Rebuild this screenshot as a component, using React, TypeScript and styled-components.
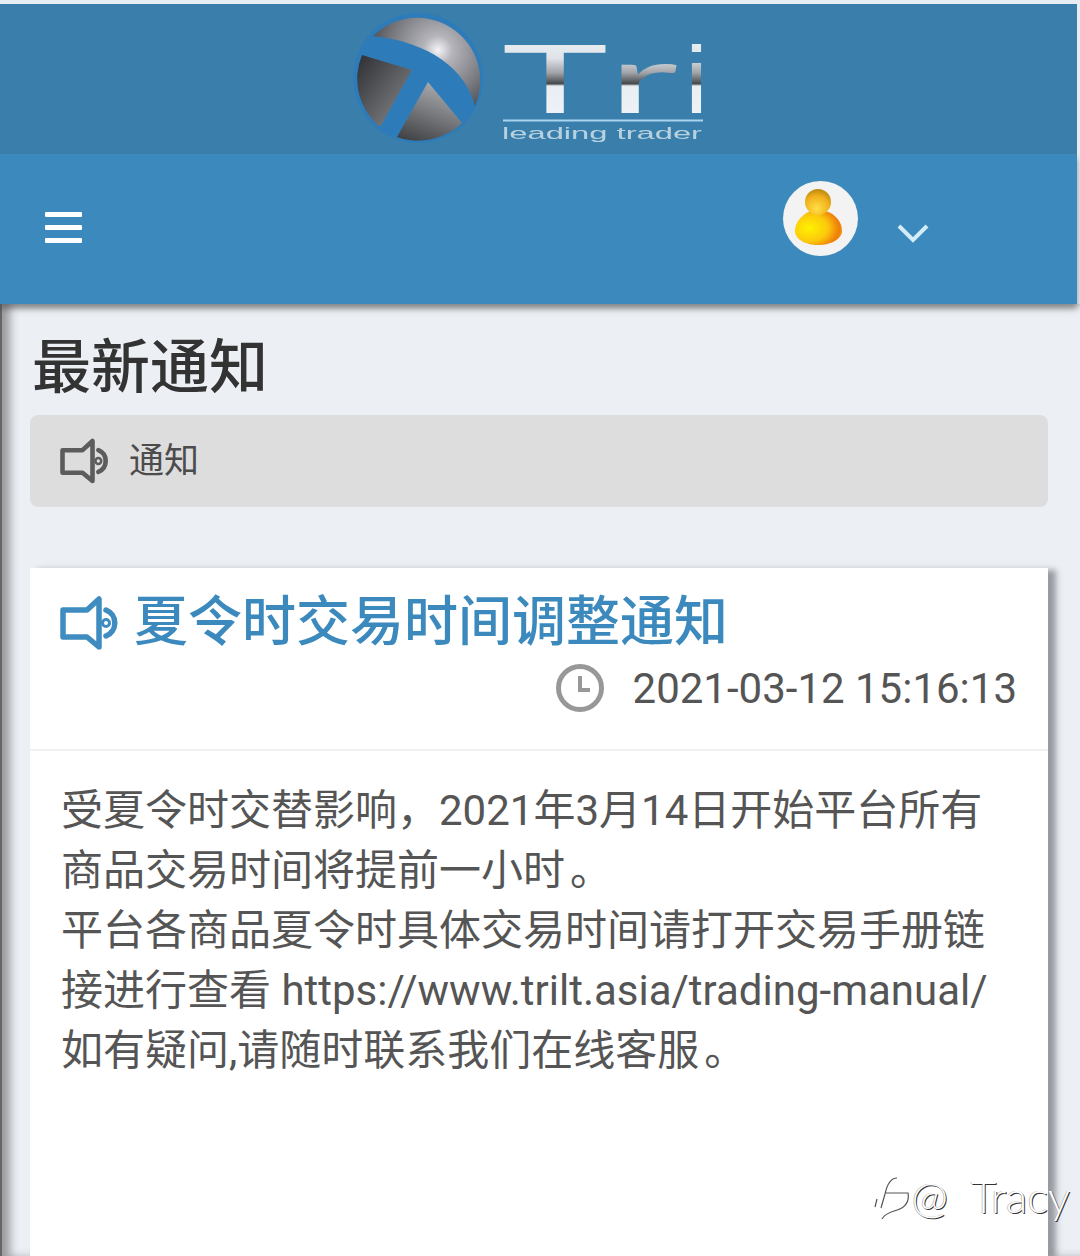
import React from "react";
import styled, { createGlobalStyle } from "styled-components";

const Global = createGlobalStyle`
  html, body { margin: 0; padding: 0; background: #e6eef4; }
  body { font-family: Roboto, "Noto Sans CJK SC", sans-serif; }
`;

const Page = styled.div`
  position: relative;
  width: 1080px;
  height: 1256px;
  padding: 4px 3px 0 0;
  box-sizing: border-box;
  overflow: hidden;
  display: flex;
  flex-direction: column;
`;
const LogoBar = styled.header`
  flex: none;
  height: 150px;
  background: #3a7fab;
  padding-left: 340px;
`;
const Logo = styled.svg`
  display: block;
  width: 380px;
  height: 150px;
  filter: blur(0.5px);
`;
const NavBar = styled.nav`
  position: relative;
  z-index: 2;
  flex: none;
  height: 150px;
  background: #3c8abd;
  display: flex;
  align-items: center;
  padding: 0 0 0 45px;
  box-shadow: 0 5px 6px rgba(60, 60, 60, 0.5);
`;
const Burger = styled.div`
  width: 37px;
  display: flex;
  flex-direction: column;
  gap: 8px;
  margin-top: -4px;
  & > i { display: block; height: 5px; background: #fff; border-radius: 1px; }
`;
const Avatar = styled.div`
  width: 75px;
  height: 75px;
  border-radius: 50%;
  background: #f4f3f3;
  margin-left: 701px;
  margin-top: -21px;
  flex: none;
`;
const Chevron = styled.svg`
  width: 32px;
  height: 20px;
  margin-left: 39px;
  margin-top: 8px;
  flex: none;
  filter: blur(0.4px);
`;
const Main = styled.main`
  flex: 1;
  min-height: 0;
  margin-right: -3px;
  padding: 27px 32px 0 30px;
  background: #ecf0f5;
  box-shadow: inset 2px 0 0 #666, inset 12px 0 10px -2px #9a9a9e;
  display: flex;
  flex-direction: column;
`;
const PageTitle = styled.h1`
  margin: 0 0 0 2px;
  font-size: 59px;
  line-height: 74px;
  height: 84px;
  font-weight: 500;
  color: #333;
`;
const Crumb = styled.div`
  flex: none;
  height: 92px;
  background: #dddddd;
  border-radius: 8px;
  display: flex;
  align-items: center;
  padding: 0 0 0 30px;
  font-size: 35px;
  color: #4c4c4c;
  gap: 19px;
`;
const CrumbLabel = styled.span`
  margin-bottom: 7px;
`;
const Speaker = styled.svg<{ $size: number }>`
  width: ${(p) => p.$size}px;
  height: ${(p) => p.$size}px;
  flex: none;
  filter: blur(0.6px);
`;
const Card = styled.article`
  flex: 1;
  margin-top: 61px;
  background: #fff;
  box-shadow: 8px 2px 6px rgba(70, 70, 75, 0.5);
  display: flex;
  flex-direction: column;
`;
const CardHead = styled.div`
  flex: none;
  height: 183px;
  padding: 25px 31px 0 30px;
  box-sizing: border-box;
  border-bottom: 2px solid #f1f1f1;
`;
const CardTitle = styled.h2`
  margin: 0;
  height: 60px;
  display: flex;
  align-items: center;
  gap: 14px;
  font-size: 54px;
  line-height: 66px;
  font-weight: 500;
  color: #3c8abd;
  white-space: nowrap;
`;
const DateRow = styled.div`
  margin-top: 10px;
  height: 50px;
  display: flex;
  align-items: center;
  justify-content: flex-end;
  gap: 28px;
  font-size: 42px;
  color: #555;
`;
const Clock = styled.svg`
  width: 50px;
  height: 50px;
  flex: none;
  filter: blur(0.6px);
`;
const CardBody = styled.div`
  padding: 30px 30px 0 31px;
  font-size: 42px;
  line-height: 60px;
  color: #555;
`;
const Stop = styled.span`
  margin-left: 5px;
`;
const Watermark = styled.div`
  position: absolute;
  right: 10px;
  top: 1172px;
  display: flex;
  align-items: center;
  gap: 1px;
  font-family: Lato, Roboto, sans-serif;
  font-weight: 300;
  font-size: 44px;
  line-height: 48px;
  color: #fff;
  text-shadow: 1px 1px 0 #333, -0.5px 0 0 #999;
  white-space: pre;
`;

const SpeakerIcon = ({ color, size }: { color: string; size: number }) => (
  <Speaker $size={size} viewBox="0 0 60 60" fill="none" stroke={color} strokeLinejoin="round" strokeLinecap="round">
    <path d="M3 17 H27 L39 6 V54 L27 44 H3 Z" strokeWidth="5.500" />
    <path d="M46 17 A14 14 0 0 1 46 43" strokeWidth="5.500" />
    <circle cx="46" cy="30" r="3.500" strokeWidth="3" />
  </Speaker>
);

const LogoArt = () => (
  <Logo viewBox="0 4 380 150">
    <defs>
      <radialGradient id="ball" gradientUnits="userSpaceOnUse" cx="98" cy="50" r="80">
        <stop offset="0" stopColor="#f4f4f8" />
        <stop offset="0.18" stopColor="#b4b4ba" />
        <stop offset="0.6" stopColor="#77787d" />
        <stop offset="1" stopColor="#3a3b40" />
      </radialGradient>
      <linearGradient id="dark" x1="0" y1="0" x2="1" y2="1">
        <stop offset="0" stopColor="#2e2f33" />
        <stop offset="1" stopColor="#8b8c90" />
      </linearGradient>
      <linearGradient id="dark2" x1="0" y1="1" x2="0.4" y2="0">
        <stop offset="0" stopColor="#3b3c40" />
        <stop offset="1" stopColor="#a4a5a8" />
      </linearGradient>
      <linearGradient id="tri" gradientUnits="userSpaceOnUse" x1="0" y1="40" x2="0" y2="113">
        <stop offset="0" stopColor="#e8eef2" />
        <stop offset="0.25" stopColor="#e0e4e8" />
        <stop offset="0.45" stopColor="#a0a4a8" />
        <stop offset="0.6" stopColor="#45484b" />
        <stop offset="0.63" stopColor="#e8eef2" />
        <stop offset="1" stopColor="#eef2f6" />
      </linearGradient>
    </defs>
    <circle cx="78" cy="78" r="65" fill="#2d7cb9" />
    <path d="M33 36 A63 63 0 0 1 135 106 C126 70 90 42 33 36 Z" fill="url(#ball)" />
    <path d="M22 55 L72 70 L40 127 A62 62 0 0 1 22 55 Z" fill="url(#dark)" />
    <path d="M88 82 L122 123 A63 63 0 0 1 57 137 Z" fill="url(#dark2)" />
    <text x="162" y="113" fontFamily="Lato, sans-serif" fontWeight="400" fontSize="95" textLength="106" lengthAdjust="spacingAndGlyphs" fill="url(#tri)">T</text>
    <text x="268" y="113" fontFamily="Lato, sans-serif" fontWeight="400" fontSize="95" textLength="70" lengthAdjust="spacingAndGlyphs" fill="url(#tri)">r</text>
    <text x="345" y="113" fontFamily="'Liberation Sans', sans-serif" fontSize="95" textLength="23" lengthAdjust="spacingAndGlyphs" fill="url(#tri)">i</text>
    <rect x="163" y="119.500" width="200" height="2" fill="#a9d4ee" />
    <text x="162" y="139" fontFamily="'Liberation Sans', sans-serif" fontSize="17" textLength="200" lengthAdjust="spacingAndGlyphs" fill="#cfe0ea" opacity="0.85">leading trader</text>
  </Logo>
);

const AvatarArt = () => (
  <Avatar>
    <svg width="75" height="75" viewBox="0 0 75 75">
      <defs>
        <radialGradient id="head" cx="0.45" cy="0.75" r="0.75">
          <stop offset="0" stopColor="#ffdf45" />
          <stop offset="0.65" stopColor="#f0b01c" />
          <stop offset="1" stopColor="#b9860f" />
        </radialGradient>
        <radialGradient id="body" cx="0.3" cy="0.5" r="0.8">
          <stop offset="0" stopColor="#fff200" />
          <stop offset="0.5" stopColor="#fbc80c" />
          <stop offset="0.8" stopColor="#ee7d0a" />
          <stop offset="1" stopColor="#eeb01a" />
        </radialGradient>
      </defs>
      <path d="M12 50 C12 38 24 31 28 30 L42 30 C48 31 59 38 59 50 C59 58 48 64 35 64 C22 64 12 58 12 50 Z" fill="url(#body)" />
      <circle cx="35" cy="21" r="13" fill="url(#head)" />
    </svg>
  </Avatar>
);

export default function App() {
  return (
    <Page>
      <Global />
      <LogoBar>
        <LogoArt />
      </LogoBar>
      <NavBar>
        <Burger>
          <i />
          <i />
          <i />
        </Burger>
        <AvatarArt />
        <Chevron viewBox="0 0 32 20" fill="none" stroke="#d4ecf8" strokeWidth="4">
          <path d="M2 3 L16 17 L30 3" />
        </Chevron>
      </NavBar>
      <Main>
        <PageTitle>最新通知</PageTitle>
        <Crumb>
          <SpeakerIcon color="#5c5c5c" size={50} />
          <CrumbLabel>通知</CrumbLabel>
        </Crumb>
        <Card>
          <CardHead>
            <CardTitle>
              <SpeakerIcon color="#3f8cc0" size={60} />
              夏令时交易时间调整通知
            </CardTitle>
            <DateRow>
              <Clock viewBox="0 0 50 50" fill="none" stroke="#989898">
                <circle cx="25" cy="25" r="21.500" strokeWidth="5" />
                <path d="M25 13 V27 H35" strokeWidth="4" />
              </Clock>
              2021-03-12 15:16:13
            </DateRow>
          </CardHead>
          <CardBody>
            受夏令时交替影响，2021年3月14日开始平台所有商品交易时间将提前一小时<Stop>。</Stop>
            <br />
            平台各商品夏令时具体交易时间请打开交易手册链接进行查看 https://www.trilt.asia/trading-manual/
            <br />
            如有疑问,请随时联系我们在线客服<Stop>。</Stop>
          </CardBody>
        </Card>
      </Main>
      <Watermark>
        <svg width="38" height="46" viewBox="0 0 38 46" fill="none" stroke="#555" strokeWidth="1.200">
          <path d="M24 5 C17 5 14 12 12 21 L8 35 M13 20 H35 C37 31 29 36 21 38 C15 40 11 42 9 46 M4 26 L2 34" />
        </svg>
        {"@  Tracy"}
      </Watermark>
    </Page>
  );
}
